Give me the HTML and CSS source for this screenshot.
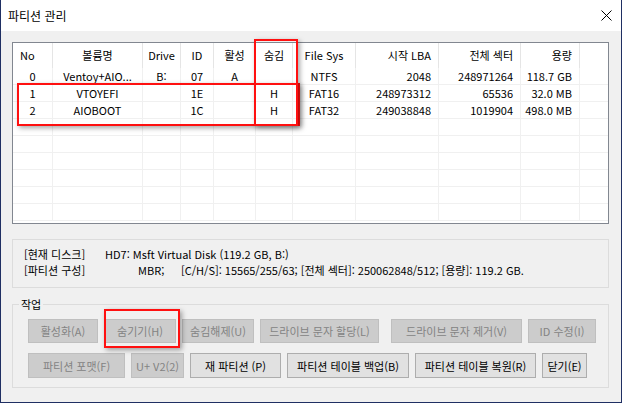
FILE: index.html
```html
<!DOCTYPE html>
<html lang="ko">
<head>
<meta charset="utf-8">
<title>파티션 관리</title>
<link rel="stylesheet" href="styles.css">
</head>
<body>
<div class="window">
  <div class="titlebar">
    <span class="title">파티션 관리</span>
    <svg class="close" width="11" height="11" viewBox="0 0 11 11"><path d="M0.5 0.5L10.5 10.5M10.5 0.5L0.5 10.5" stroke="#000" stroke-width="1" fill="none"/></svg>
  </div>
  <div class="content">
    <div class="list">
      <div class="row head">
        <div class="cell l">No</div>
        <div class="cell c">볼륨명</div>
        <div class="cell c">Drive</div>
        <div class="cell c">ID</div>
        <div class="cell c">활성</div>
        <div class="cell c">숨김</div>
        <div class="cell c">File Sys</div>
        <div class="cell r">시작 LBA</div>
        <div class="cell r">전체 섹터</div>
        <div class="cell r">용량</div>
        <div class="cell last"></div>
      </div>
      <div class="row item">
        <div class="cell c">0</div>
        <div class="cell c">Ventoy+AIO...</div>
        <div class="cell c">B:</div>
        <div class="cell c">07</div>
        <div class="cell c">A</div>
        <div class="cell c"></div>
        <div class="cell c">NTFS</div>
        <div class="cell r">2048</div>
        <div class="cell r">248971264</div>
        <div class="cell r">118.7 GB</div>
        <div class="cell last"></div>
      </div>
      <div class="row item">
        <div class="cell c">1</div>
        <div class="cell c">VTOYEFI</div>
        <div class="cell c"></div>
        <div class="cell c">1E</div>
        <div class="cell c"></div>
        <div class="cell c">H</div>
        <div class="cell c">FAT16</div>
        <div class="cell r">248973312</div>
        <div class="cell r">65536</div>
        <div class="cell r">32.0 MB</div>
        <div class="cell last"></div>
      </div>
      <div class="row item">
        <div class="cell c">2</div>
        <div class="cell c">AIOBOOT</div>
        <div class="cell c"></div>
        <div class="cell c">1C</div>
        <div class="cell c"></div>
        <div class="cell c">H</div>
        <div class="cell c">FAT32</div>
        <div class="cell r">249038848</div>
        <div class="cell r">1019904</div>
        <div class="cell r">498.0 MB</div>
        <div class="cell last"></div>
      </div>
      <div class="row item empty"><div class="cell"></div><div class="cell"></div><div class="cell"></div><div class="cell"></div><div class="cell"></div><div class="cell"></div><div class="cell"></div><div class="cell"></div><div class="cell"></div><div class="cell"></div><div class="cell last"></div></div>
      <div class="row item empty"><div class="cell"></div><div class="cell"></div><div class="cell"></div><div class="cell"></div><div class="cell"></div><div class="cell"></div><div class="cell"></div><div class="cell"></div><div class="cell"></div><div class="cell"></div><div class="cell last"></div></div>
      <div class="row item empty"><div class="cell"></div><div class="cell"></div><div class="cell"></div><div class="cell"></div><div class="cell"></div><div class="cell"></div><div class="cell"></div><div class="cell"></div><div class="cell"></div><div class="cell"></div><div class="cell last"></div></div>
      <div class="row item empty"><div class="cell"></div><div class="cell"></div><div class="cell"></div><div class="cell"></div><div class="cell"></div><div class="cell"></div><div class="cell"></div><div class="cell"></div><div class="cell"></div><div class="cell"></div><div class="cell last"></div></div>
      <div class="row item empty"><div class="cell"></div><div class="cell"></div><div class="cell"></div><div class="cell"></div><div class="cell"></div><div class="cell"></div><div class="cell"></div><div class="cell"></div><div class="cell"></div><div class="cell"></div><div class="cell last"></div></div>
      <div class="row item empty"><div class="cell"></div><div class="cell"></div><div class="cell"></div><div class="cell"></div><div class="cell"></div><div class="cell"></div><div class="cell"></div><div class="cell"></div><div class="cell"></div><div class="cell"></div><div class="cell last"></div></div>
    </div>

    <div class="info">
      <div class="line"><span class="lbl">[현재 디스크]</span><span>HD7: Msft Virtual Disk (119.2 GB, B:)</span></div>
      <div class="line"><span class="lbl">[파티션 구성]</span><span class="mbr">MBR;</span><span>[C/H/S]: 15565/255/63; [전체 섹터]: 250062848/512; [용량]: 119.2 GB.</span></div>
    </div>

    <fieldset class="ops">
      <legend>작업</legend>
      <div class="btnrow first">
        <button class="btn w-a1" disabled>활성화(A)</button>
        <button class="btn w-a2" disabled>숨기기(H)</button>
        <button class="btn w-a3" disabled>숨김해제(U)</button>
        <button class="btn w-a4" disabled>드라이브 문자 할당(L)</button>
        <button class="btn w-a5" disabled>드라이브 문자 제거(V)</button>
        <button class="btn w-a6" disabled>ID 수정(I)</button>
      </div>
      <div class="btnrow second">
        <button class="btn w-b1" disabled>파티션 포맷(F)</button>
        <button class="btn w-b2" disabled>U+ V2(2)</button>
        <button class="btn w-b3">재 파티션 (P)</button>
        <button class="btn w-b4">파티션 테이블 백업(B)</button>
        <button class="btn w-b5">파티션 테이블 복원(R)</button>
        <button class="btn w-b6">닫기(E)</button>
      </div>
    </fieldset>
  </div>

  <div class="mark mark-rows"></div>
  <div class="mark mark-col"></div>
  <div class="mark mark-btn"></div>
</div>
</body>
</html>
```

FILE: styles.css
```css
html, body {
  margin: 0;
  padding: 0;
  background: #f0f0f0;
}

body {
  font-family: "Noto Sans CJK KR", "Noto Sans", sans-serif;
  font-size: 11px;
  color: #000;
}

.window {
  position: relative;
  width: 622px;
  height: 403px;
  box-sizing: border-box;
  border: 1px solid #1f2f63;
  border-top: none;
  background: #f0f0f0;
  display: flex;
  flex-direction: column;
  overflow: hidden;
}

.titlebar {
  flex: none;
  height: 31px;
  background: #fff;
  display: flex;
  align-items: center;
  justify-content: space-between;
  padding: 0 9px 0 7px;
}

.title {
  font-size: 12px;
  line-height: 18px;
}

.close {
  display: block;
}

.content {
  padding: 11px 12px 0 11px;
}

.list {
  height: 182px;
  box-sizing: border-box;
  border: 1px solid #828790;
  background: #fff;
  overflow: hidden;
}

.row {
  display: grid;
  grid-template-columns: 40px 90px 38px 33px 42px 37px 63px 83px 82px 59px 1fr;
}

.cell {
  box-sizing: border-box;
  white-space: nowrap;
  overflow: hidden;
}

.cell.c { text-align: center; }
.cell.r { text-align: right; padding-right: 7px; }
.cell.l { text-align: left; padding-left: 7px; }

.head {
  height: 25px;
}

.head .cell {
  line-height: 25px;
  border-right: 1px solid #e5e5e5;
}

.item {
  height: 17px;
  box-sizing: border-box;
  border-bottom: 1px solid #f0f0f0;
}

.item .cell {
  line-height: 16px;
  border-right: 1px solid #f0f0f0;
}

.row .cell.last {
  border-right: none;
}

.info {
  margin-top: 15px;
  height: 49px;
  box-sizing: border-box;
  border: 1px solid #dcdcdc;
  padding: 6px 0 0 11px;
}

.line {
  display: flex;
  line-height: 16px;
  height: 16px;
  white-space: nowrap;
}

.lbl {
  width: 81px;
  flex: none;
}

.mbr {
  margin-left: 33px;
  width: 43px;
  flex: none;
}

.ops {
  margin: 9px 0 0;
  padding: 0 0 9px 0;
  border: 1px solid #dcdcdc;
  min-width: 0;
}

.ops legend {
  margin-left: 6px;
  padding: 0 2px;
  font-size: 11px;
  line-height: 14px;
}

.btnrow {
  display: flex;
  gap: 6px;
  margin-left: 15px;
}

.btnrow.first {
  margin-top: 8px;
}

.btnrow.second {
  margin-top: 10px;
}

.btn {
  box-sizing: border-box;
  height: 24px;
  padding: 0;
  margin: 0;
  border: 1px solid #adadad;
  background: #e1e1e1;
  color: #000;
  font-family: inherit;
  font-size: 11px;
  line-height: 14px;
  white-space: nowrap;
  border-radius: 0;
}

.second .btn {
  height: 25px;
}

.btn:disabled {
  background: #cccccc;
  border-color: #bfbfbf;
  color: #838383;
}

.w-a1 { width: 70px; }
.w-a2 { width: 72px; }
.w-a3 { width: 72px; }
.w-a4 { width: 119px; }
.w-a5 { width: 131px; margin-left: 6px; }
.w-a6 { width: 68px; }

.w-b1 { width: 97px; }
.w-b2 { width: 53px; }
.w-b3 { width: 91px; }
.w-b4 { width: 122px; }
.w-b5 { width: 121px; }
.w-b6 { width: 45px; }

.mark {
  position: absolute;
  box-sizing: border-box;
  border: 2px solid #ff1010;
  box-shadow: 2px 2px 5px rgba(0, 0, 0, 0.35);
  pointer-events: none;
}

.mark-rows {
  left: 16px;
  top: 83px;
  width: 283px;
  height: 43px;
}

.mark-col {
  left: 253px;
  top: 39px;
  width: 44px;
  height: 87px;
}

.mark-btn {
  left: 103px;
  top: 309px;
  width: 76px;
  height: 39px;
}
```
